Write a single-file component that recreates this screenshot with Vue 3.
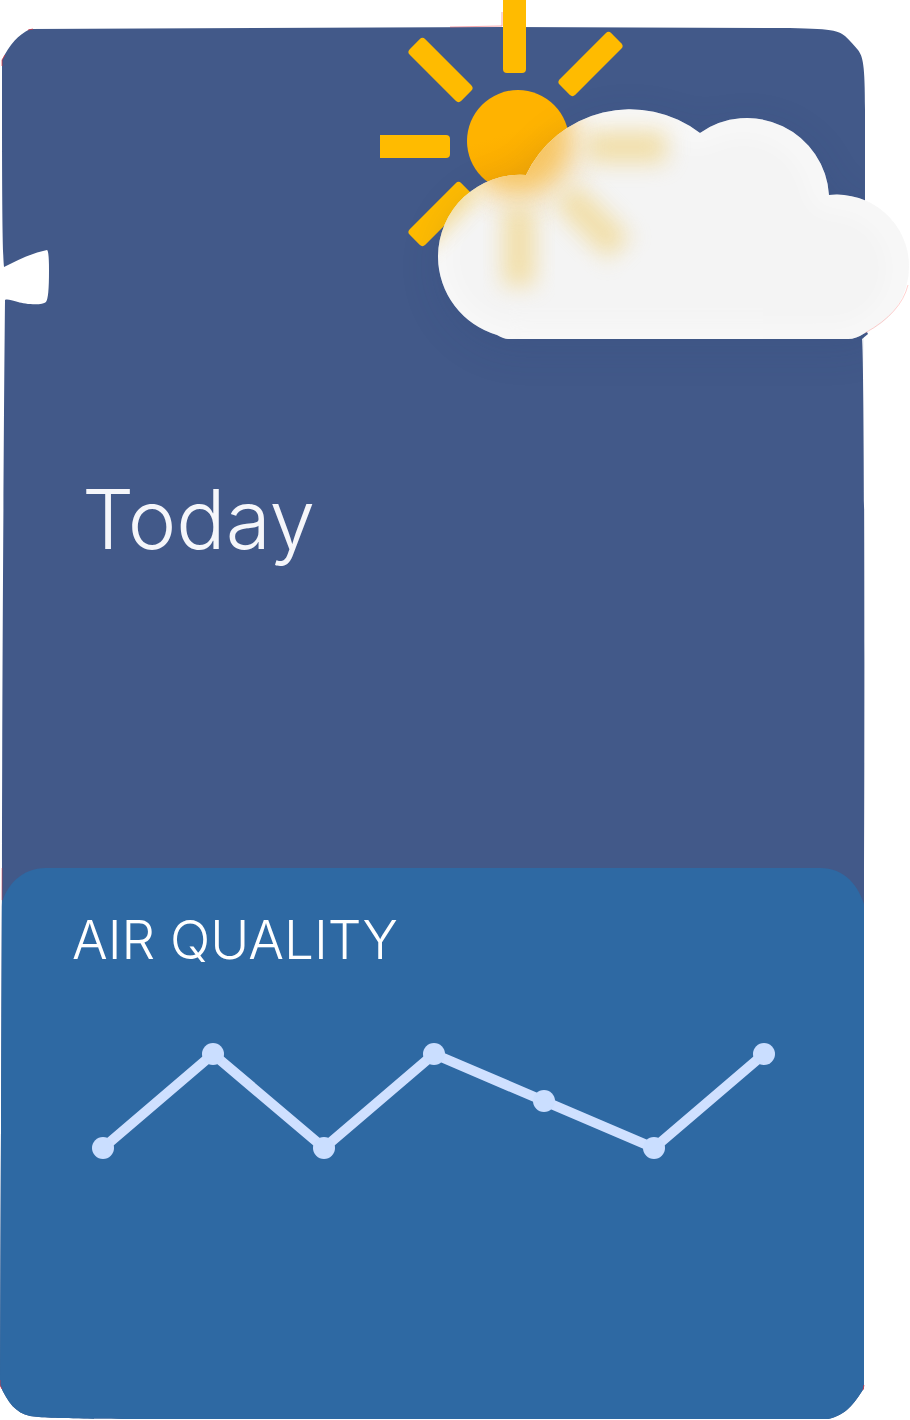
<script setup>
const readings = [
  { x: 103, y: 108 },
  { x: 213, y: 14 },
  { x: 324, y: 108 },
  { x: 434, y: 14 },
  { x: 544, y: 61 },
  { x: 654, y: 108 },
  { x: 764, y: 14 },
]
const line = readings.map((p) => `${p.x},${p.y}`).join(' ')
</script>

<template>
  <main class="weather">
    <svg class="backdrop" viewBox="0 0 910 1420" preserveAspectRatio="none" aria-hidden="true">
      <defs>
        <path
          id="card-shape"
          d="M30 29C18 35 10 44 2 60C2 160 2 250 4 267C18 260 32 253 47 250Q49 251 49 270C49 290 48 299 46 302C42 306 24 304 18 302C11 300 7 299 5 300C4 400 2 700 2 868L0 1385C8 1403 16 1413 30 1416C50 1419 100 1419 240 1419L828 1419C846 1415 854 1404 864 1388L864 870C865 600 864 350 862 339L868 334L865 328L865 110C865 64 863 57 858 50C854 45 850 41 845 36C838 30 828 28 770 28L503 27Z"
        />
        <clipPath id="card-clip"><use href="#card-shape" /></clipPath>
      </defs>
      <use href="#card-shape" fill="#425989" />
      <path
        d="M0 1420V912C3 888 20 868 46 868H820C846 868 861 888 866 912V1420Z"
        fill="#2e69a3"
        clip-path="url(#card-clip)"
      />
      <g fill="none" stroke="#e8323c" stroke-width="1" opacity="0.7">
        <path d="M2 66V60L5 55" />
        <path d="M28 30L33 29" />
        <path d="M450 27L502 26V12" opacity="0.6" />
        <path d="M2 868V900" opacity="0.6" />
        <path d="M0 1380V1385L2 1389" />
        <path d="M864 1385L863 1390" />
      </g>
    </svg>

    <header class="today">
      <svg class="sky" viewBox="0 0 910 400" role="img" aria-label="Partly cloudy">
        <defs>
          <linearGradient id="sun-fill" x1="0" y1="0" x2="0.3" y2="1">
            <stop offset="0.5" stop-color="#ffb300" />
            <stop offset="1" stop-color="#f8a800" />
          </linearGradient>
          <path
            id="cloud-shape"
            d="M508 339Q504 339 497 335A82 82 0 0 1 438 257A82 82 0 0 1 526 175A115 115 0 0 1 700 133A82 82 0 0 1 829 195A72 72 0 0 1 909 266A72 72 0 0 1 865 333Q856 339 848 339Z"
          />
          <clipPath id="cloud-clip"><use href="#cloud-shape" /></clipPath>
          <clipPath id="shade-clip"><path d="M0 28H864V400H0Z" /></clipPath>
          <g color-interpolation-filters="sRGB">
            <filter id="soft" x="-60%" y="-100%" width="220%" height="300%">
              <feGaussianBlur stdDeviation="11" />
            </filter>
            <filter id="glow" x="-60%" y="-60%" width="220%" height="220%">
              <feGaussianBlur stdDeviation="15" />
            </filter>
            <filter id="rim" x="-10%" y="-20%" width="120%" height="140%">
              <feGaussianBlur stdDeviation="14" />
            </filter>
            <filter id="shade" x="-20%" y="-40%" width="140%" height="190%">
              <feGaussianBlur stdDeviation="20" />
            </filter>
          </g>
        </defs>

        <g fill="#ffbb00">
          <path d="M503 0H526V69Q526 73 522 73H507Q503 73 503 69Z" />
          <path d="M380 135H446Q450 135 450 139V154Q450 158 446 158H380Z" />
          <rect x="404" y="59" width="73" height="22" rx="4" transform="rotate(45 440.5 70)" />
          <rect x="404" y="203" width="73" height="22" rx="4" transform="rotate(-45 440.5 214)" />
          <rect x="554" y="53" width="73" height="22" rx="4" transform="rotate(-45 590.5 64)" />
        </g>
        <circle cx="518" cy="141" r="51" fill="url(#sun-fill)" />

        <g clip-path="url(#shade-clip)">
          <use
            href="#cloud-shape"
            transform="translate(0 10)"
            fill="#253d70"
            opacity="0.14"
            filter="url(#shade)"
          />
        </g>

        <use href="#cloud-shape" fill="#f4f4f4" />
        <g clip-path="url(#cloud-clip)">
          <use
            href="#cloud-shape"
            transform="translate(-4 2)"
            fill="none"
            stroke="#ffffff"
            stroke-width="22"
            opacity="0.55"
            filter="url(#rim)"
          />
          <circle cx="518" cy="141" r="56" fill="#f7b93e" opacity="0.8" filter="url(#glow)" />
          <g fill="#f0cf70">
            <rect x="588" y="131" width="78" height="32" rx="4" opacity="0.56" filter="url(#soft)" />
            <rect x="503" y="208" width="32" height="78" rx="4" opacity="0.56" filter="url(#soft)" />
            <g transform="rotate(45 593 222)">
              <rect x="554" y="206" width="76" height="32" rx="4" opacity="0.56" filter="url(#soft)" />
            </g>
            <g transform="rotate(-45 440.5 214)">
              <rect x="404" y="203" width="78" height="24" rx="4" opacity="0.8" filter="url(#soft)" />
            </g>
          </g>
        </g>
        <path
          d="M908 285Q901 313 865 333"
          fill="none"
          stroke="#ff6a66"
          stroke-width="1"
          opacity="0.3"
        />
      </svg>
      <h1>Today</h1>
    </header>

    <section class="air" aria-labelledby="air-title">
      <h2 id="air-title">AIR QUALITY</h2>
      <svg class="chart" viewBox="0 0 910 122" role="img" aria-labelledby="air-title">
        <polyline
          :points="line"
          fill="none"
          stroke="#cfe0ff"
          stroke-width="10"
          stroke-linejoin="round"
        />
        <circle v-for="p in readings" :key="p.x" :cx="p.x" :cy="p.y" r="11" fill="#cadeff" />
      </svg>
    </section>
  </main>
</template>

<style>
body {
  background: #ffffff;
}
</style>

<style scoped>
.weather {
  position: relative;
  display: grid;
  grid-template-rows: 868fr 552fr;
  min-height: 100vh;
  font-family: Inter, Lato, sans-serif;
}

.backdrop {
  position: absolute;
  inset: 0;
  width: 100%;
  height: 100%;
}

.today,
.air {
  position: relative;
}

.sky,
.chart {
  display: block;
  width: 100%;
  height: auto;
}

h1,
h2 {
  margin: 0;
  font-weight: 300;
}

h1 {
  padding: 72px 82px 0;
  font-size: 82px;
  line-height: 96px;
  color: #f5f6fa;
}

h2 {
  padding: 40px 72px 0;
  font-size: 53px;
  line-height: 64px;
  color: #ffffff;
}

.chart {
  margin-top: 68px;
}
</style>
